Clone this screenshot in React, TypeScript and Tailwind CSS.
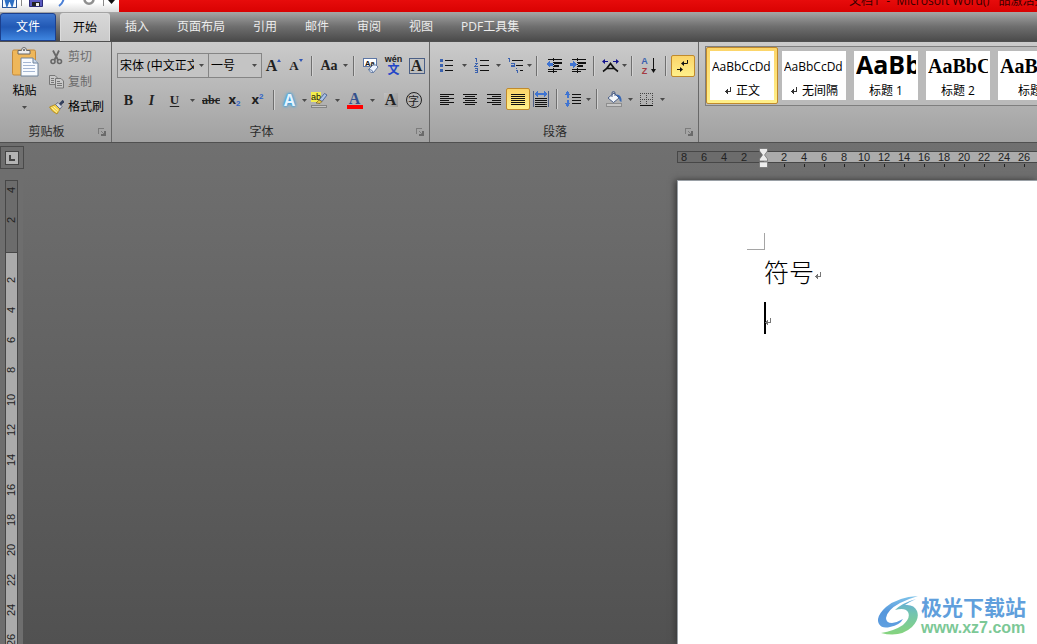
import React, { useState } from 'react';

const tabs = ['插入', '页面布局', '引用', '邮件', '审阅', '视图', 'PDF工具集'];

const styleItems = [
  { name: '正文', sample: 'AaBbCcDd', mark: true, className: 'text-[12px] leading-[31px]' },
  { name: '无间隔', sample: 'AaBbCcDd', mark: true, className: 'text-[12px] leading-[31px]' },
  { name: '标题 1', sample: 'AaBb', mark: false, className: 'text-[25px] font-bold leading-[27px]' },
  { name: '标题 2', sample: 'AaBbC', mark: false, className: 'text-[20px] font-bold font-[Liberation_Serif,serif] leading-[31px]' },
  { name: '标题', sample: 'AaBbC', mark: false, className: 'text-[20px] font-bold font-[Liberation_Serif,serif] leading-[31px]' },
];

const marginNumbers = [8, 6, 4, 2];
const rulerNumbers = [2, 4, 6, 8, 10, 12, 14, 16, 18, 20, 22, 24, 26, 28, 30, 32, 34, 36, 38, 40];

const Caret = () => (
  <svg width="5" height="3" viewBox="0 0 5 3" className="shrink-0">
    <path d="M0 0H5L2.5 3Z" fill="#4a4a4a" />
  </svg>
);

const Sep = () => (
  <div className="flex w-[10px] shrink-0 justify-center">
    <div className="h-5 w-[2px] border-l border-[#6f6f6f] bg-[#d2d2d2]" />
  </div>
);

const Tool = ({ label, width = 'w-[23px]', caret = '', children }: any) => (
  <button type="button" aria-label={label} title={label} className="flex h-[24px] shrink-0 items-center text-[#222]">
    <span className={`flex items-center justify-center ${width}`}>{children}</span>
    {caret && <span className={`flex items-center justify-center ${caret}`}><Caret /></span>}
  </button>
);

const ActiveTool = ({ label, children }: any) => (
  <button
    type="button"
    aria-label={label}
    aria-pressed="true"
    title={label}
    className="flex h-[22px] w-[24px] shrink-0 items-center justify-center rounded-[2px] border border-[#c08a2c] bg-linear-to-b from-[#fbd469] to-[#fff08a]"
  >
    {children}
  </button>
);

const Group = ({ name, width, children }: any) => (
  <section className={`flex shrink-0 flex-col border-r border-[#686868] ${width}`}>
    <div className="h-[80px]">{children}</div>
    <div className="flex h-[20px] items-center">
      <span className="flex-1 text-center text-[#2b2b2b]">{name}</span>
      <button type="button" aria-label={`${name}选项`} className="w-[18px] pl-[5px]">
        <svg width="8" height="8" viewBox="0 0 8 8" fill="none" stroke="#7c7c7c" shapeRendering="crispEdges">
          <path d="M0.5 6V0.5H6" />
          <path d="M3 3L6 6" />
          <path d="M7 3V7H3" stroke="#6a6a6a" strokeWidth="1.500" />
        </svg>
      </button>
    </div>
  </section>
);

// lines: list of [x, y, width]
const Lines = ({ lines, w = 16, h = 14, children }: any) => (
  <svg width={w} height={h} viewBox={`0 0 ${w} ${h}`} shapeRendering="crispEdges">
    {lines.map(([x, y, len]: number[], i: number) => (
      <rect key={i} x={x} y={y} width={len} height="1" fill="#111" />
    ))}
    {children}
  </svg>
);

const ReturnMark = ({ color = '#777' }) => (
  <svg width="8" height="8" viewBox="0 0 8 8" fill="none" stroke={color} shapeRendering="crispEdges">
    <path d="M6.5 0V4.5H1" />
    <path d="M3.5 2V7M2.5 3V6" />
  </svg>
);

const PasteIcon = () => (
  <svg width="27" height="30" viewBox="0 0 27 30">
    <rect x="0.5" y="3" width="23" height="25" rx="1.5" fill="#efb75a" stroke="#c58a3a" />
    <path d="M6 7V3.5H9.500Q9.500 0.5 12 0.5T14.500 3.500H18V7Z" fill="#eee" stroke="#666" />
    <circle cx="12" cy="3" r="1" fill="#555" />
    <path d="M9 11H21L26 16V29H9Z" fill="#f8fbff" stroke="#6f8299" />
    <path d="M21 11V16H26" fill="#cddbee" stroke="#6f8299" />
    <path d="M11 15.500H19M11 18.500H23M11 21.500H23M11 24.500H23" stroke="#a5b7d3" />
  </svg>
);

const CutIcon = () => (
  <svg width="15" height="15" viewBox="0 0 15 15" fill="none" stroke="#686868">
    <path d="M4 0.500L9 10M10 0.500L5.500 10" strokeWidth="1.800" />
    <circle cx="4" cy="11.500" r="2" strokeWidth="1.600" />
    <circle cx="10.500" cy="11.500" r="2" strokeWidth="1.600" />
  </svg>
);

const CopyIcon = () => (
  <svg width="15" height="14" viewBox="0 0 15 14" fill="#c9c9c9" stroke="#777">
    <path d="M0.500 0.500H6L8.500 3V9.500H0.500Z" />
    <path d="M2 3.500H5M2 5.500H5M2 7.500H5" />
    <path d="M6.500 3.500H12L14.500 6V13H6.500Z" />
    <path d="M8 6.500H11M8 8.500H13M8 10.500H13" />
  </svg>
);

const BrushIcon = () => (
  <svg width="15" height="15" viewBox="0 0 15 15">
    <path d="M0.500 7L6.500 4.500L11 9L8 14Q3 12 0.500 7Z" fill="#f3cf45" stroke="#a8821e" strokeWidth="0.800" />
    <path d="M2.500 7.500L8 12.500M4.500 6.500L9.500 11" stroke="#fff6b8" />
    <path d="M6.500 4.500L9 2.500L13 6.500L11 9Z" fill="#d6dbe6" stroke="#555f78" strokeWidth="0.800" />
    <path d="M11 4.500L14.500 0.800" stroke="#33405e" strokeWidth="2.600" />
  </svg>
);

const TitleBar = () => (
  <header className="-mt-3 flex h-6 shrink-0 overflow-hidden">
    <div className="flex w-[119px] shrink-0 items-center bg-linear-to-b from-white from-60% to-[#dedede] pl-[2px]">
      <svg width="15" height="15" viewBox="0 0 15 15" className="shrink-0">
        <rect x="0.500" y="0.500" width="14" height="14" fill="#f5faff" stroke="#2b579a" />
        <path d="M3 4L5 11.500L7.500 5L10 11.500L12 4" fill="none" stroke="#2d6fc4" strokeWidth="2.500" />
      </svg>
      <span className="ml-[4px] h-3 w-px bg-[#8a8a8a]" />
      <button type="button" aria-label="保存" className="ml-[7px]">
        <svg width="14" height="13" viewBox="0 0 14 13">
          <path d="M0.500 0.500H13.500V12.500H0.500Z" fill="#5a5ac0" stroke="#2c2c78" />
          <rect x="3" y="8" width="8" height="4" fill="#222" />
          <rect x="7" y="9" width="3" height="3" fill="#eee" />
        </svg>
      </button>
      <button type="button" aria-label="撤消" className="ml-[12px]">
        <svg width="12" height="13" viewBox="0 0 12 13" fill="none" stroke="#4a7fd6" strokeWidth="2">
          <path d="M1 4Q10 1 8 7Q7 10 4 12" />
        </svg>
      </button>
      <button type="button" aria-label="恢复" className="ml-[16px]">
        <svg width="12" height="12" viewBox="0 0 12 12" fill="none" stroke="#8f8f8f" strokeWidth="2.500">
          <path d="M9 2A4.500 4.500 0 1 1 3 2" />
        </svg>
      </button>
      <span className="ml-[8px] h-3 w-px bg-[#8a8a8a]" />
      <button type="button" aria-label="自定义快速访问工具栏" className="ml-[4px] pt-[3px]">
        <svg width="7" height="4" viewBox="0 0 7 4"><path d="M0 0H7L3.500 4Z" fill="#111" /></svg>
      </button>
    </div>
    <h1 className="min-w-0 flex-1 overflow-hidden bg-linear-to-b from-[#f51414] to-[#d90202] pl-[70.4%] text-[12px] leading-[26px] whitespace-pre text-[#3a0000]">
      文档1  -  Microsoft Word(产品激活失败)
    </h1>
  </header>
);

const TabBar = () => (
  <nav className="flex h-[29px] shrink-0 items-end bg-linear-to-b from-[#a6a6a6] via-[#6f6f6f] to-[#4b4b4b]">
    <button type="button" className="h-[28px] w-[56px] rounded-t-[3px] border border-[#1c3f8c] bg-linear-to-b from-[#3f78d0] via-[#2158b4] to-[#3f86e0] text-white">
      文件
    </button>
    <button type="button" className="ml-1 h-[28px] w-[50px] rounded-t-[3px] border border-b-0 border-[#dcdcdc] bg-linear-to-b from-[#d8d8d8] to-[#cacaca] text-black">
      开始
    </button>
    <div className="ml-px flex">
      {tabs.map((tab) => (
        <button key={tab} type="button" className="h-[28px] shrink-0 px-[14px] text-[#ececec]">
          {tab}
        </button>
      ))}
    </div>
  </nav>
);

const ClipboardGroup = () => (
  <Group name="剪贴板" width="w-[112px]">
    <div className="flex pt-[5px]">
      <button type="button" className="flex w-[49px] flex-col items-center">
        <span className="pl-[1px]"><PasteIcon /></span>
        <span className="mt-[6px] leading-4">粘贴</span>
        <span className="mt-[7px]"><Caret /></span>
      </button>
      <div className="flex flex-col items-start">
        <button type="button" disabled className="flex h-[20px] items-center gap-1 text-[#6b6b6b]"><CutIcon />剪切</button>
        <button type="button" disabled className="mt-[5px] flex h-[20px] items-center gap-1 text-[#6b6b6b]"><CopyIcon />复制</button>
        <button type="button" className="mt-[5px] flex h-[20px] items-center gap-1"><BrushIcon />格式刷</button>
      </div>
    </div>
  </Group>
);

const Combo = ({ label, width, value, options, onChange }: any) => (
  <div className={`relative h-[25px] shrink-0 ${width}`}>
    <select
      aria-label={label}
      value={value}
      onChange={(e) => onChange(e.target.value)}
      className="h-full w-full appearance-none border border-[#858585] bg-[#c4c4c4] pr-[14px] pl-[2px]"
    >
      {options.map((option: string) => <option key={option}>{option}</option>)}
    </select>
    <span className="pointer-events-none absolute inset-y-0 right-[5px] flex items-center"><Caret /></span>
  </div>
);

const FontGroup = () => {
  const [font, setFont] = useState('宋体 (中文正文)');
  const [size, setSize] = useState('一号');

  return (
    <Group name="字体" width="w-[318px]">
      <div className="pt-[11px] pl-[5px]">
        <div className="flex h-[25px] items-center">
          <Combo label="字体" width="w-[92px]" value={font} options={['宋体 (中文正文)', '黑体', '楷体']} onChange={setFont} />
          <div className="-ml-px"><Combo label="字号" width="w-[54px]" value={size} options={['初号', '一号', '二号']} onChange={setSize} /></div>
          <Tool label="增大字体" width="w-[23px]">
            <span className="font-[Liberation_Serif,serif] text-[16px] leading-4 font-bold">A</span>
            <svg width="4" height="14" viewBox="0 0 4 14"><path d="M0 3H4L2 0Z" fill="#2f55b5" /></svg>
          </Tool>
          <Tool label="缩小字体" width="w-[22px]">
            <span className="font-[Liberation_Serif,serif] text-[13px] leading-4 font-bold">A</span>
            <svg width="4" height="14" viewBox="0 0 4 14"><path d="M0 0H4L2 3Z" fill="#2f55b5" /></svg>
          </Tool>
          <Sep />
          <Tool label="更改大小写" width="w-[24px]" caret="w-[8px]">
            <span className="font-[Liberation_Serif,serif] text-[14px] font-bold">Aa</span>
          </Tool>
          <Sep />
          <Tool label="清除格式">
            <svg width="16" height="16" viewBox="0 0 16 16">
              <rect x="0.500" y="0.500" width="13" height="8" fill="#fff" stroke="#5d76a5" />
              <text x="2" y="7.500" fontSize="7.500" fontWeight="bold" fontFamily="Liberation Sans" fill="#111">Aa</text>
              <path d="M5.500 11.500L10 7Q13.500 6 15 9L10.500 14.500Q7 15.500 5.500 11.500Z" fill="#eef4ff" stroke="#6078a0" />
              <path d="M5.500 11.500Q9 11 10.500 14.500" fill="none" stroke="#6078a0" />
            </svg>
          </Tool>
          <Tool label="拼音指南">
            <span className="flex flex-col items-center font-[Liberation_Sans,Noto_Sans_CJK_SC,sans-serif]">
              <span className="text-[9px] leading-[9px] font-bold">wén</span>
              <span className="text-[12px] leading-[12px] font-bold text-[#2346c8]">文</span>
            </span>
          </Tool>
          <Tool label="字符边框">
            <span className="flex h-4 w-4 items-center justify-center border border-[#4b5f85] font-[Liberation_Serif,serif] text-[16px] leading-4 font-bold">A</span>
          </Tool>
        </div>
        <div className="mt-[10px] flex h-[24px] items-center font-[Liberation_Serif,serif] text-[14px]">
          <Tool label="加粗"><b>B</b></Tool>
          <Tool label="倾斜"><b className="italic">I</b></Tool>
          <Tool label="下划线" caret="w-[13px]"><b className="text-[13px] underline underline-offset-2">U</b></Tool>
          <Tool label="删除线" width="w-[24px]"><b className="text-[12px] line-through">abc</b></Tool>
          <Tool label="下标">
            <b className="font-[Open_Sans,sans-serif] text-[13px]">x</b>
            <b className="pt-[7px] font-[Liberation_Sans,sans-serif] text-[8px] text-[#2f62c8]">2</b>
          </Tool>
          <Tool label="上标">
            <b className="font-[Open_Sans,sans-serif] text-[13px]">x</b>
            <b className="pb-[7px] font-[Liberation_Sans,sans-serif] text-[8px] text-[#2f62c8]">2</b>
          </Tool>
          <Sep />
          <Tool label="文本效果" width="w-[21px]" caret="w-[8px]">
            <span className="font-[Open_Sans,sans-serif] text-[16px] font-bold text-[#e4f4ff] [text-shadow:0_0_2px_#2f9bdc,0_0_3px_#2f9bdc,0_0_4px_#58b4e8]">A</span>
          </Tool>
          <Tool label="突出显示" caret="w-[12px]">
            <svg width="17" height="17" viewBox="0 0 17 17">
              <rect x="0" y="0" width="10" height="10" fill="#f4ee4e" />
              <text x="0" y="8" fontSize="9" fontFamily="Liberation Sans" fill="#111">ab</text>
              <path d="M8 8L13.500 1.500L16 3L11 9.500Z" fill="#a9c2e8" stroke="#3c5488" strokeWidth="0.800" />
              <path d="M5 11L8 8L11 9.500L9 11.500Z" fill="#e8c848" stroke="#665022" strokeWidth="0.600" />
              <rect x="0.500" y="13.500" width="15" height="2" fill="#c4c4c4" stroke="#858585" />
            </svg>
          </Tool>
          <Tool label="字体颜色" caret="w-[13px]">
            <span className="flex flex-col items-center">
              <span className="text-[16px] leading-[13px] font-bold text-[#34508c]">A</span>
              <span className="h-[4px] w-4 bg-[#f00]" />
            </span>
          </Tool>
          <Tool label="字符底纹">
            <span className="flex h-[14px] w-[14px] items-center justify-center bg-linear-to-br from-[#c2c2c2] to-[#949494] text-[16px] leading-[14px] font-bold">A</span>
          </Tool>
          <Tool label="带圈字符">
            <span className="flex h-4 w-4 items-center justify-center rounded-full border border-[#222] font-[Noto_Sans_CJK_SC,sans-serif] text-[11px] leading-3">字</span>
          </Tool>
        </div>
      </div>
    </Group>
  );
};

const ParagraphGroup = () => (
  <Group name="段落" width="w-[269px]">
    <div className="pt-[11px] pl-[6px]">
      <div className="flex h-[25px] items-center">
        <Tool label="项目符号" width="w-[22px]" caret="w-[12px]">
          <Lines w={14} lines={[[5, 1, 8], [5, 6, 8], [5, 11, 8]]}>
            <path d="M0 0H3V3H0ZM0 5H3V8H0ZM0 10H3V13H0Z" fill="#3b62ae" />
          </Lines>
        </Tool>
        <Tool label="编号" width="w-[22px]" caret="w-[12px]">
          <Lines w={15} h={15} lines={[[6, 2, 9], [6, 7, 9], [6, 12, 9]]}>
            <path d="M1 0.500H2.500V4M0.500 5.500H3L1 8.500H3.500M0.500 10.500H3V14H0.500M1 12.500H3" fill="none" stroke="#3b62ae" />
          </Lines>
        </Tool>
        <Tool label="多级列表" width="w-[22px]" caret="w-[6px]">
          <Lines w={17} h={16} lines={[[5, 2, 11], [9, 7, 7], [13, 12, 3]]}>
            <path d="M1 0.500H2.500V4M4 5.500H7V8.500H4.500V7.500H7M9.500 10V11M9 12.500H10.500V15" fill="none" stroke="#3b62ae" />
          </Lines>
        </Tool>
        <Sep />
        <Tool label="减少缩进量" width="w-[24px]">
          <Lines w={16} h={15} lines={[[2, 1, 14], [8, 4, 8], [8, 5, 8], [8, 7, 5], [8, 8, 5], [2, 11, 14], [2, 13, 9]]}>
            <path d="M0 6L4 2.500V5H7V8H4V10Z" fill="#3f74d2" />
            <path d="M7.500 0V15" stroke="#111" strokeDasharray="1 1" />
          </Lines>
        </Tool>
        <Tool label="增加缩进量">
          <Lines w={16} h={15} lines={[[2, 1, 14], [8, 4, 8], [8, 5, 8], [8, 7, 5], [8, 8, 5], [2, 11, 14], [2, 13, 9]]}>
            <path d="M7 6L3 2.500V5H0V8H3V10Z" fill="#3f74d2" />
            <path d="M7.500 0V15" stroke="#111" strokeDasharray="1 1" />
          </Lines>
        </Tool>
        <Sep />
        <Tool label="中文版式" width="w-[22px]" caret="w-[6px]">
          <svg width="17" height="14" viewBox="0 0 17 14" fill="none">
            <path d="M1 12.500Q5 10 8.500 4.500Q12 10 16 12.500M4.500 9.500H12.500" stroke="#111" strokeWidth="1.700" />
            <path d="M0 2.500L3 0V5ZM17 2.500L14 0V5Z" fill="#12128c" />
            <path d="M2 2.500H6M11 2.500H15" stroke="#12128c" />
          </svg>
        </Tool>
        <Sep />
        <Tool label="排序" width="w-[24px]">
          <span className="flex flex-col items-center font-[Liberation_Sans,sans-serif] text-[9px] leading-[10px] font-bold">
            <span className="text-[#3b5fae]">A</span>
            <span className="text-[#a43a42]">Z</span>
          </span>
          <svg width="7" height="16" viewBox="0 0 7 16" className="ml-[2px]">
            <path d="M3.500 0V12" stroke="#111" />
            <path d="M1 11H6L3.500 15Z" fill="#111" />
          </svg>
        </Tool>
        <Sep />
        <ActiveTool label="显示编辑标记">
          <svg width="12" height="14" viewBox="0 0 12 14" fill="none" stroke="#111">
            <path d="M10.500 1V4.500H5" />
            <path d="M4 4.500L7 2V7ZM6 10.500L3 8V13Z" fill="#111" stroke="none" />
            <path d="M0 10.500H4" />
          </svg>
        </ActiveTool>
      </div>
      <div className="mt-[8px] flex h-[26px] items-center">
        <Tool label="左对齐" width="w-[22px]">
          <Lines w={14} h={11} lines={[[0, 0, 14], [0, 2, 9], [0, 4, 14], [0, 6, 9], [0, 8, 14], [0, 10, 9]]} />
        </Tool>
        <Tool label="居中">
          <Lines w={14} h={11} lines={[[0, 0, 14], [2, 2, 10], [0, 4, 14], [2, 6, 10], [0, 8, 14], [2, 10, 10]]} />
        </Tool>
        <Tool label="右对齐" width="w-[25px]">
          <Lines w={14} h={11} lines={[[0, 0, 14], [5, 2, 9], [0, 4, 14], [5, 6, 9], [0, 8, 14], [5, 10, 9]]} />
        </Tool>
        <ActiveTool label="两端对齐">
          <Lines w={14} h={11} lines={[[0, 0, 14], [0, 2, 14], [0, 4, 14], [0, 6, 14], [0, 8, 14], [0, 10, 14]]} />
        </ActiveTool>
        <Tool label="分散对齐" width="w-[22px]">
          <Lines w={16} h={16} lines={[[2, 7, 12], [2, 9, 12], [2, 11, 12], [2, 13, 12], [2, 15, 12]]}>
            <path d="M0.500 0V16M15.500 0V16" stroke="#4d5f86" />
            <path d="M1 3L5 0V2H11V0L15 3L11 6V4H5V6Z" fill="#3f74d2" />
          </Lines>
        </Tool>
        <Sep />
        <Tool label="行距" width="w-[22px]" caret="w-[8px]">
          <Lines w={16} h={17} lines={[[7, 3, 9], [7, 6, 9], [7, 9, 9], [7, 12, 9]]}>
            <path d="M2.500 0L5.500 4H3.500V7H1.500V4H-0.500ZM2.500 16L5.500 12H3.500V9H1.500V12H-0.500Z" fill="#3f74d2" />
          </Lines>
        </Tool>
        <Sep />
        <Tool label="底纹" width="w-[24px]" caret="w-[8px]">
          <svg width="17" height="16" viewBox="0 0 17 16">
            <path d="M2 7L8 2L13 7L7.500 11.500Z" fill="#f4f7fb" stroke="#4a5f88" />
            <path d="M6 6V2Q6 0.500 7.500 0.500T9 2V5" fill="none" stroke="#4a5f88" />
            <path d="M10 3.500Q16 3 15.500 11Q13 10 13 7Z" fill="#3767b5" />
            <rect x="0.500" y="12.500" width="15" height="3" fill="#c6c6c6" stroke="#8d8d8d" />
          </svg>
        </Tool>
        <Tool label="框线" width="w-[24px]" caret="w-[8px]">
          <svg width="13" height="13" viewBox="0 0 13 13" fill="none" stroke="#444" shapeRendering="crispEdges">
            <path d="M0 0.500H13M0 6.500H13M0.500 0V12M6.500 0V12M12.500 0V12" strokeDasharray="1 1" />
            <path d="M0 12.500H13" stroke="#111" />
          </svg>
        </Tool>
      </div>
    </div>
  </Group>
);

const StylesGallery = () => {
  const [active, setActive] = useState('正文');

  return (
    <div className="min-w-0 flex-1 overflow-hidden pt-[4px] pl-[6px]">
      <div className="flex h-[60px] overflow-hidden border border-r-0 border-[#7f7f7f] bg-[#bababa]">
        {styleItems.map((item) => (
          <button
            key={item.name}
            type="button"
            onClick={() => setActive(item.name)}
            className={`h-[57px] w-[72px] shrink-0 rounded-[2px] border p-[3px] ${active === item.name ? 'border-[#c08a2c] bg-linear-to-b from-[#fbd469] to-[#fff08a]' : 'border-transparent'}`}
          >
            <span className="flex h-[49px] flex-col overflow-hidden bg-white px-[2px] text-black">
              <span className={`h-[31px] overflow-hidden text-left ${item.className}`}>{item.sample}</span>
              <span className="flex h-[18px] items-center justify-center gap-1 whitespace-nowrap">
                {item.mark && <ReturnMark color="#333" />}
                {item.name}
              </span>
            </span>
          </button>
        ))}
      </div>
    </div>
  );
};

const VerticalRuler = () => (
  <aside className="flex w-[23px] shrink-0 flex-col bg-[#6e6e6e]">
    <button type="button" aria-label="制表符" className="mt-[3px] flex h-[23px] w-[24px] shrink-0 items-center justify-center border border-[#4a4a4a]">
      <span className="flex h-[14px] w-[14px] items-center justify-center border border-[#444] bg-[#b4b4b4]">
        <span className="h-[6px] w-[6px] border-b-2 border-l-2 border-[#444]" />
      </span>
    </button>
    <div className="mt-[11px] ml-[5px] flex w-[13px] flex-1 flex-col overflow-hidden border border-b-0 border-[#474747] bg-[#ababab] font-[Liberation_Sans,sans-serif] text-[11px] leading-[11px] text-[#222]">
      <div className="flex h-[72px] shrink-0 flex-col justify-end border-b border-[#474747] bg-[#6c6c6c] pb-[17px]">
        {[4, 2].map((n) => (
          <span key={n} className="flex h-[30px] shrink-0 rotate-180 items-center justify-center [writing-mode:vertical-rl]">{n}</span>
        ))}
      </div>
      <div className="pt-3">
        {rulerNumbers.map((n) => (
          <span key={n} className="flex h-[30px] rotate-180 items-center justify-center [writing-mode:vertical-rl]">{n}</span>
        ))}
      </div>
    </div>
  </aside>
);

const HorizontalRuler = () => (
  <div className="relative flex h-[18px] shrink-0 font-[Liberation_Sans,sans-serif] text-[11px] leading-[10px] text-[#222]">
    <div className="flex h-[12px] w-[87px] shrink-0 justify-end overflow-hidden border border-r-0 border-[#474747] bg-[#6c6c6c] pr-[10px]">
      {marginNumbers.map((n) => <span key={n} className="w-[20px] shrink-0 text-center">{n}</span>)}
    </div>
    <div className="flex min-w-0 flex-1 overflow-hidden">
      <div className="h-[12px] w-[10px] shrink-0 border-y border-[#474747] bg-[#ababab]" />
      {rulerNumbers.map((n) => (
        <div key={n} className="flex w-[20px] shrink-0 flex-col items-center">
          <span className="h-[12px] w-full border-y border-[#474747] bg-[#ababab] text-center">{n}</span>
          <span className="mt-[1px] h-[3px] w-px bg-[#222]" />
        </div>
      ))}
    </div>
    <svg width="9" height="20" viewBox="0 0 9 20" className="absolute -top-[3px] left-[82px]">
      <path d="M0.500 0.500H8.500V3L5.500 7L8.500 11V13H0.500V11L3.500 7L0.500 3Z" fill="#ececec" stroke="#6a6a6a" strokeWidth="0.700" />
      <rect x="0.500" y="14" width="8" height="5.500" fill="#ececec" stroke="#6a6a6a" strokeWidth="0.700" />
    </svg>
  </div>
);

const Page = () => (
  <article className="flex-1 border-t border-l border-[#9aa0a6] bg-white pt-[52px] pl-[69px] font-light text-black shadow-[-2px_0_6px_#3a3a3a]">
    <div className="h-[17px] w-[18px] border-r border-b border-[#a5a5a5]" />
    <div className="pt-[4px] pl-[17px]">
      <p className="flex h-[36px] items-center text-[25px] leading-9">
        符号
        <span className="pt-[8px]"><ReturnMark /></span>
      </p>
      <p className="mt-[12px] flex h-[32px] items-center">
        <span className="h-full w-[2px] bg-black" />
        <span className="-ml-[2px] pt-[7px]"><ReturnMark /></span>
      </p>
    </div>
  </article>
);

const Watermark = () => (
  <a href="#site" className="absolute right-[11px] bottom-[7px] flex items-center gap-[2px] font-bold">
    <svg width="41" height="40" viewBox="0 0 41 40">
      <defs>
        <linearGradient id="swirlTop" x1="0" y1="0" x2="0" y2="1">
          <stop offset="0" stopColor="#7fc4ea" />
          <stop offset="0.500" stopColor="#5596dc" />
          <stop offset="1" stopColor="#5f9fe0" />
        </linearGradient>
        <linearGradient id="swirlBottom" x1="0" y1="0" x2="0" y2="1">
          <stop offset="0" stopColor="#62a8e2" />
          <stop offset="0.400" stopColor="#72c4b0" />
          <stop offset="1" stopColor="#86d47c" />
        </linearGradient>
      </defs>
      <path d="M40 0Q20 1 8 11Q-3 21 1 28Q4 33 12 31Q22 29 25 23Q20 26 14 27Q8 27 8 22Q9 14 22 7Q30 3 40 0Z" fill="url(#swirlTop)" />
      <path d="M38 3Q24 7 17 14Q27 11 30 16Q33 22 25 29Q16 35 3 37Q22 42 34 31Q42 23 39 15Q36 8 27 9Q31 6 38 3Z" fill="url(#swirlBottom)" />
    </svg>
    <span className="flex flex-col">
      <span className="text-[21px] leading-[24px] text-[#609fdc]">极光下载站</span>
      <span className="font-[Liberation_Sans,sans-serif] text-[16px] leading-[18px] text-[#7cc896]">www.xz7.com</span>
    </span>
  </a>
);

const App = () => {
  return (
    <div className="flex h-screen flex-col overflow-hidden bg-[#666] font-[Open_Sans,Noto_Sans_CJK_SC,sans-serif] text-[12px] text-black">
      <TitleBar />
      <TabBar />
      <div className="flex h-[102px] shrink-0 border-y border-[#505050] bg-linear-to-b from-[#cbcbcb] to-[#a1a1a1]">
        <ClipboardGroup />
        <FontGroup />
        <ParagraphGroup />
        <StylesGallery />
      </div>
      <main className="relative flex min-h-0 flex-1 overflow-hidden bg-linear-to-b from-[#707070] to-[#515151]">
        <VerticalRuler />
        <div className="grid min-w-0 flex-1 grid-cols-[654fr_360fr]">
          <div />
          <div className="flex min-w-0 flex-col pt-[8px]">
            <HorizontalRuler />
            <div className="h-[11px] shrink-0" />
            <Page />
          </div>
        </div>
        <Watermark />
      </main>
    </div>
  );
};

export default App;
